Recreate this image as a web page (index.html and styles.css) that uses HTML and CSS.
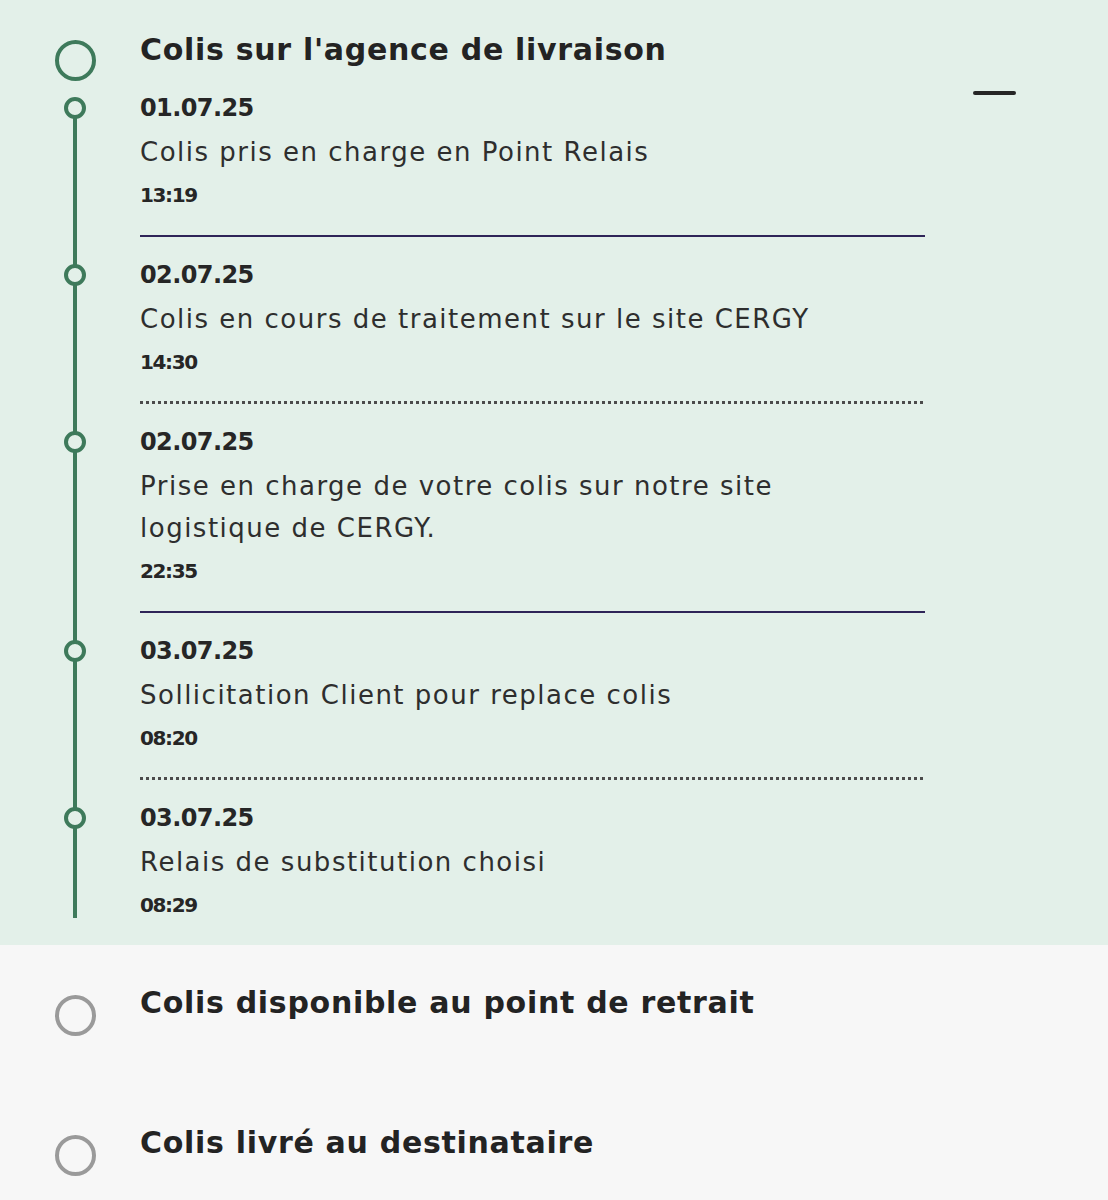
FILE: index.html
```html
<!DOCTYPE html>
<html lang="fr">
<head>
    <meta charset="UTF-8">
    <meta name="viewport" content="width=device-width, initial-scale=1.0">
    <title>Suivi de colis</title>
    <link rel="stylesheet" href="styles.css">
</head>
<body>
    <div class="tracking">
        <!-- étape en cours, dépliée -->
        <section class="step step-open">
            <div class="step-head">
                <span class="step-icon"></span>
                <h2 class="step-title">Colis sur l'agence de livraison</h2>
            </div>
            <button class="toggle" aria-label="Replier"></button>

            <div class="events">
                <div class="event first">
                    <div class="event-marker"></div>
                    <div class="event-body">
                        <div class="event-date">01.07.25</div>
                        <div class="event-text">Colis pris en charge en Point Relais</div>
                        <div class="event-time">13:19</div>
                    </div>
                </div>
                <div class="event dotted">
                    <div class="event-marker"></div>
                    <div class="event-body">
                        <div class="event-date">02.07.25</div>
                        <div class="event-text">Colis en cours de traitement sur le site CERGY</div>
                        <div class="event-time">14:30</div>
                    </div>
                </div>
                <div class="event">
                    <div class="event-marker"></div>
                    <div class="event-body">
                        <div class="event-date">02.07.25</div>
                        <div class="event-text">Prise en charge de votre colis sur notre site<br>logistique de CERGY.</div>
                        <div class="event-time">22:35</div>
                    </div>
                </div>
                <div class="event dotted">
                    <div class="event-marker"></div>
                    <div class="event-body">
                        <div class="event-date">03.07.25</div>
                        <div class="event-text">Sollicitation Client pour replace colis</div>
                        <div class="event-time">08:20</div>
                    </div>
                </div>
                <div class="event last">
                    <div class="event-marker"></div>
                    <div class="event-body">
                        <div class="event-date">03.07.25</div>
                        <div class="event-text">Relais de substitution choisi</div>
                        <div class="event-time">08:29</div>
                    </div>
                </div>
            </div>
        </section>

        <!-- étapes à venir -->
        <section class="step step-pending">
            <div class="step-head">
                <span class="step-icon"></span>
                <h2 class="step-title">Colis disponible au point de retrait</h2>
            </div>
        </section>
        <section class="step step-pending">
            <div class="step-head">
                <span class="step-icon"></span>
                <h2 class="step-title">Colis livré au destinataire</h2>
            </div>
        </section>
    </div>
</body>
</html>
```

FILE: styles.css
```css
*,
*::before,
*::after {
    margin: 0;
    padding: 0;
    box-sizing: border-box;
}

body {
    background: #f7f7f7;
    color: #262626;
    font-family: "DejaVu Sans", "Noto Sans", sans-serif;
}

.tracking {
    width: 1108px;
}

.step {
    position: relative;
}

.step-open {
    background: #e3f0e9;
    padding: 30px 0 18px;
}

.step-pending {
    height: 140px;
    padding-top: 38px;
}

.step-head {
    display: grid;
    grid-template-columns: 140px 1fr;
    grid-template-rows: 40px;
    align-items: start;
}

.step-icon {
    display: block;
    width: 41px;
    height: 41px;
    margin: 10px 0 0 55px;
    border: 4px solid #3e7a5b;
    border-radius: 50%;
}

.step-pending .step-icon {
    margin-top: 12px;
    border-color: #9a9a9a;
}

.step-title {
    font-size: 30px;
    line-height: 40px;
    font-weight: 700;
    letter-spacing: 0.7px;
    color: #232323;
}

/* bouton replier : un simple trait */
.toggle {
    position: absolute;
    top: 91px;
    right: 92px;
    width: 43px;
    height: 4px;
    border: none;
    border-radius: 2px;
    background: #262626;
}

.event {
    display: grid;
    grid-template-columns: 140px 785px;
}

.event-marker {
    position: relative;
}

/* ligne verticale de la frise */
.event-marker::before {
    content: "";
    position: absolute;
    left: 73px;
    top: 0;
    bottom: 0;
    width: 4px;
    background: #3e7a5b;
}

.event.first .event-marker::before {
    top: 38px;
}

.event.last .event-marker::before {
    bottom: 9px;
}

/* pastille de l'événement */
.event-marker::after {
    content: "";
    position: absolute;
    left: 64px;
    top: 27px;
    width: 22px;
    height: 22px;
    border: 4px solid #3e7a5b;
    border-radius: 50%;
    background: #e3f0e9;
}

.event-body {
    padding: 15px 0 18px;
    border-bottom: 2px solid #2f2558;
}

.event.dotted .event-body {
    border-bottom: none;
    padding-bottom: 20px;
    background: repeating-linear-gradient(90deg, #4b4b4b 0 3px, transparent 3px 6px) left bottom / 100% 3px no-repeat;
}

.event.last .event-body {
    padding-bottom: 0;
    border-bottom: none;
}

.event-date {
    font-size: 24px;
    line-height: 46px;
    font-weight: 700;
    letter-spacing: -0.6px;
}

.event-text {
    font-size: 26px;
    line-height: 42px;
    letter-spacing: 1.5px;
    color: #2e2e2e;
}

.event-time {
    font-size: 20px;
    line-height: 44px;
    font-weight: 700;
    letter-spacing: -1.4px;
}
```
